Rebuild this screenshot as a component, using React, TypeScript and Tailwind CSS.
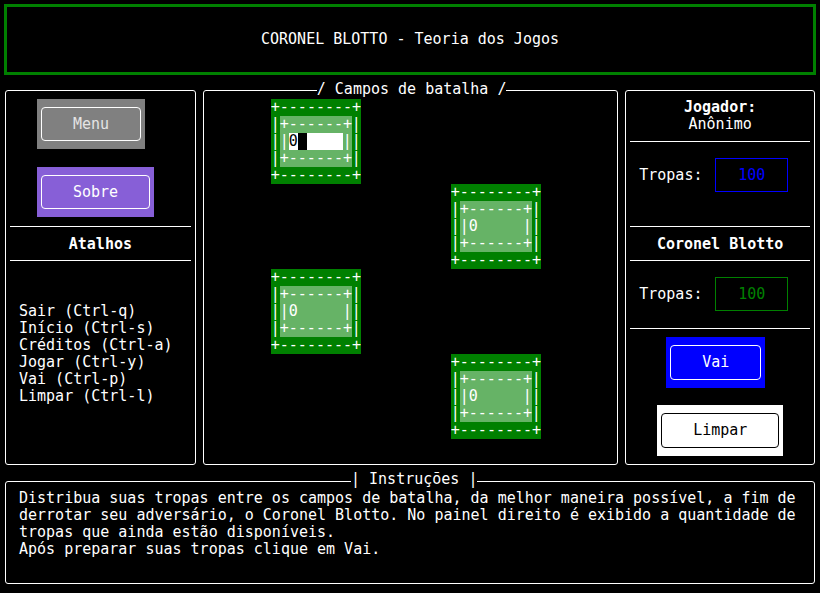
import React from 'react';

function Field({ active = false }: { active?: boolean }) {
  return (
    <div className="w-[90px] h-[85px] bg-[#008000] text-white leading-[17px] whitespace-pre overflow-hidden">
      <div>+--------+</div>
      <div className="flex">
        <div className="w-[9px]">|<br />|<br />|</div>
        <div className="w-[72px] bg-[#66b366]">
          <div>+------+</div>
          <div className="flex">
            <span className="w-[9px]">|</span>
            {active ? (
              <span className="w-[54px] flex bg-white text-black">
                <span className="w-[9px]">0</span>
                <span className="w-[9px] bg-black" />
              </span>
            ) : (
              <span className="w-[54px]">0</span>
            )}
            <span className="w-[9px]">|</span>
          </div>
          <div>+------+</div>
        </div>
        <div className="w-[9px]">|<br />|<br />|</div>
      </div>
      <div>+--------+</div>
    </div>
  );
}

export default function App() {
  return (
    <div className="w-[820px] h-[593px] bg-black text-white font-['DejaVu_Sans_Mono',monospace] text-[15px] leading-[17px] px-[5px] pt-[4px] overflow-hidden">
      {/* Header */}
      <div className="-mx-px h-[71px] border-[3px] border-[#008000] flex items-center justify-center">
        CORONEL BLOTTO - Teoria dos Jogos
      </div>

      <div className="flex gap-[7px] mt-[15px] h-[375px]">
        {/* Left panel */}
        <div className="w-[191px] border border-white rounded-[3px]">
          <div className="ml-[31px] mt-[8px] w-[108px] h-[50px] bg-[#808080] px-[4px] py-[8px]">
            <div className="h-full border border-white rounded-[4px] flex items-center justify-center text-[#e4e4e4]">
              Menu
            </div>
          </div>
          <div className="ml-[31px] mt-[18px] w-[117px] h-[50px] bg-[#875fd7] px-[4px] py-[8px]">
            <div className="h-full border border-white rounded-[4px] flex items-center justify-center">
              Sobre
            </div>
          </div>
          <div className="mx-[4px] mt-[9px] h-px bg-white" />
          <div className="h-[33px] pt-[1px] flex items-center justify-center font-bold">Atalhos</div>
          <div className="mx-[4px] h-px bg-white" />
          <div className="pl-[13px] mt-[42px]">
            <div>Sair (Ctrl-q)</div>
            <div>Início (Ctrl-s)</div>
            <div>Créditos (Ctrl-a)</div>
            <div>Jogar (Ctrl-y)</div>
            <div>Vai (Ctrl-p)</div>
            <div>Limpar (Ctrl-l)</div>
          </div>
        </div>

        {/* Battlefields */}
        <div className="relative w-[416px] border border-white rounded-[3px]">
          <div className="absolute left-[113px] top-[-10px] bg-black whitespace-pre">/ Campos de batalha /</div>
          <div className="pt-[8px] pl-[67px] grid grid-cols-[90px_90px] gap-x-[90px]">
            <div className="col-start-1 row-start-1">
              <Field active />
            </div>
            <div className="col-start-2 row-start-2">
              <Field />
            </div>
            <div className="col-start-1 row-start-3">
              <Field />
            </div>
            <div className="col-start-2 row-start-4">
              <Field />
            </div>
          </div>
        </div>

        {/* Right panel */}
        <div className="w-[190px] border border-white rounded-[3px]">
          <div className="pt-[8px] text-center">
            <div className="font-bold">Jogador:</div>
            <div>Anônimo</div>
          </div>
          <div className="mx-[4px] mt-[8px] h-px bg-white" />
          <div className="mt-[16px] pl-[13px] flex items-center">
            <span className="w-[76px]">Tropas:</span>
            <div className="w-[73px] h-[34px] border border-[#0000ff] flex items-center justify-center text-[#0000ff]">
              100
            </div>
          </div>
          <div className="mx-[4px] mt-[34px] h-px bg-white" />
          <div className="h-[33px] pt-[1px] flex items-center justify-center font-bold">Coronel Blotto</div>
          <div className="mx-[4px] h-px bg-white" />
          <div className="mt-[16px] pl-[13px] flex items-center">
            <span className="w-[76px]">Tropas:</span>
            <div className="w-[73px] h-[34px] border border-[#008000] flex items-center justify-center text-[#008000]">
              100
            </div>
          </div>
          <div className="mx-[4px] mt-[17px] h-px bg-white" />
          <div className="ml-[40px] mt-[8px] w-[99px] h-[51px] bg-[#0000ff] px-[4px] py-[8px]">
            <div className="h-full border border-white rounded-[4px] flex items-center justify-center">
              Vai
            </div>
          </div>
          <div className="ml-[31px] mt-[17px] w-[126px] h-[51px] bg-white px-[4px] py-[8px]">
            <div className="h-full border border-black rounded-[4px] flex items-center justify-center text-black">
              Limpar
            </div>
          </div>
        </div>
      </div>

      {/* Instructions */}
      <div className="relative mt-[16px] h-[103px] border border-white rounded-[3px] pl-[13px] pt-[8px]">
        <div className="absolute left-[345px] top-[-10px] leading-[14px] bg-black whitespace-pre">| Instruções |</div>
        <div>Distribua suas tropas entre os campos de batalha, da melhor maneira possível, a fim de</div>
        <div>derrotar seu adversário, o Coronel Blotto. No painel direito é exibido a quantidade de</div>
        <div>tropas que ainda estão disponíveis.</div>
        <div>Após preparar suas tropas clique em Vai.</div>
      </div>
    </div>
  );
}
